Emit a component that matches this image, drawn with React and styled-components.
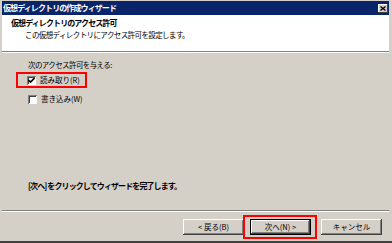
import styled, { createGlobalStyle } from 'styled-components';

const GlobalStyle = createGlobalStyle`
  html, body {
    margin: 0;
    padding: 0;
    background: #d4d0c8;
  }
  body {
    font-family: "Noto Sans CJK JP", "Noto Sans", sans-serif;
    color: #000;
  }
`

const Window = styled.div`
  width: 392px;
  height: 243px;
  box-sizing: border-box;
  background: #d4d0c8;
  padding: 1px 3px 0 2px;
  border-bottom: 2px solid #404040;
  display: flex;
  flex-direction: column;
  font-size: 7.5px;
  letter-spacing: -0.6px;
  line-height: 10px;
`

const Bold = styled.div`
  font-weight: bold;
  font-size: 8px;
  letter-spacing: -0.9px;
`

const TitleBar = styled(Bold)`
  height: 14px;
  background: #0a246a;
  color: #fff;
  display: flex;
  align-items: center;
  justify-content: space-between;
  padding: 0 1px 0 1px;
`

const CloseButton = styled.div`
  width: 10px;
  height: 9px;
  background: #d4d0c8;
  box-shadow: inset -1px -1px #404040, inset 1px 1px #fff;
  display: flex;
  align-items: center;
  justify-content: center;
`

const Header = styled.div`
  background: #fff;
  height: 36px;
  padding: 3px 0 0 9px;
  box-sizing: border-box;
`

const HeaderText = styled.div`
  margin-top: 2px;
  padding-left: 14px;
`

const Separator = styled.div`
  border-top: 1px solid #808080;
  border-bottom: 1px solid #fff;
`

const Body = styled.div`
  flex: 1;
  padding: 7px 0 19px 26px;
  display: flex;
  flex-direction: column;
  align-items: flex-start;
`

const Highlight = styled.div`
  border: 2px solid #f00;
  padding: ${p => p.$pad || '0'};
  margin: ${p => p.$margin || '0'};
  display: flex;
`

const CheckRow = styled.label`
  display: flex;
  align-items: center;
  gap: 4px;
  height: 12px;
  letter-spacing: 0;
  margin: ${p => p.$margin || '0'};
`

const Box = styled.span`
  width: 9px;
  height: 9px;
  background: #fff;
  box-shadow: inset 1px 1px #808080, inset -1px -1px #fff, inset 2px 2px #404040;
  display: flex;
  align-items: center;
  justify-content: center;
`

const Footer = styled(Bold)`
  margin-top: auto;
`

const ButtonBar = styled.div`
  height: 29px;
  display: flex;
  align-items: center;
  justify-content: flex-end;
  padding-right: 7px;
`

const Button = styled.div`
  width: 61px;
  height: 16px;
  box-sizing: border-box;
  background: #d4d0c8;
  display: flex;
  align-items: center;
  justify-content: center;
  letter-spacing: 0;
  margin-left: ${p => p.$gap || 0}px;
  border: ${p => (p.$default ? '1px solid #000' : 'none')};
  box-shadow: inset -1px -1px #404040, inset 1px 1px #fff, inset -2px -2px #808080;
`

const Check = ({ checked }) => (
  <Box>
    {checked && (
      <svg width="7" height="7" viewBox="0 0 7 7">
        <path d="M0.5 3 L2.5 5 L6.5 1" stroke="#000" strokeWidth="1.6" fill="none" />
      </svg>
    )}
  </Box>
)

export default function App() {
  return (
    <>
      <GlobalStyle />
      <Window>
        <TitleBar>
          <span>仮想ディレクトリの作成ウィザード</span>
          <CloseButton>
            <svg width="6" height="5" viewBox="0 0 6 5">
              <path d="M0.5 0.5 L5.5 4.5 M5.5 0.5 L0.5 4.5" stroke="#000" strokeWidth="1.3" />
            </svg>
          </CloseButton>
        </TitleBar>
        <Header>
          <Bold>仮想ディレクトリのアクセス許可</Bold>
          <HeaderText>この仮想ディレクトリにアクセス許可を設定します。</HeaderText>
        </Header>
        <Separator />
        <Body>
          <div>次のアクセス許可を与える:</div>
          <Highlight $margin="2px 0 0 -12px" $pad="0 5px 0 9px">
            <CheckRow>
              <Check checked />
              <span>読み取り(R)</span>
            </CheckRow>
          </Highlight>
          <CheckRow $margin="5px 0 0 0">
            <Check />
            <span>書き込み(W)</span>
          </CheckRow>
          <Footer>[次へ] をクリックしてウィザードを完了します。</Footer>
        </Body>
        <Separator />
        <ButtonBar>
          <Button>&lt; 戻る(B)</Button>
          <Highlight $margin="0 0 0 -1px" $pad="2px 4px 2px 5px">
            <Button $default>次へ(N) &gt;</Button>
          </Highlight>
          <Button $gap={4}>キャンセル</Button>
        </ButtonBar>
      </Window>
    </>
  )
}
